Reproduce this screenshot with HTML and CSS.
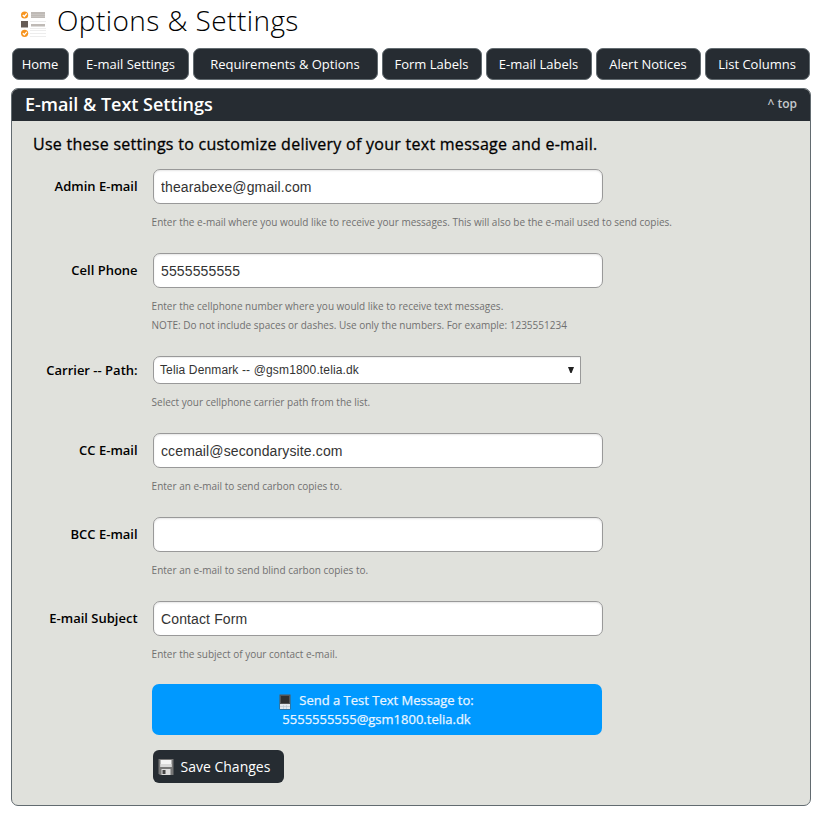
FILE: index.html
```html
<!DOCTYPE html>
<html lang="en">
<head>
<meta charset="utf-8">
<title>Options &amp; Settings</title>
<link rel="stylesheet" href="styles.css">
</head>
<body>
<header class="page-head">
  <svg class="list-icon" width="26" height="28" viewBox="0 0 26 28">
    <g fill="#f7941e"><circle cx="3.6" cy="4" r="3.6"/><circle cx="3.6" cy="22.3" r="3.6"/></g>
    <path d="M1.8 4l1.5 1.5 2.5-3M1.8 22.3l1.5 1.5 2.5-3" fill="none" stroke="#fff" stroke-width="1.3"/>
    <path d="M0 10h7v6.500H0z" fill="#665c56"/>
    <path d="M10 1h14v6H10z" fill="#bfbab6"/>
    <path d="M10 3.500h14M10 5.500h14" stroke="#d0ccc9" stroke-width=".6"/>
    <path d="M10 13h14v2.500H10z" fill="#bfbab6"/>
    <path d="M9 10.500h16M9 17.500h16M9 19.500h16M9 22.500h16M9 25.500h16" stroke="#ededed"/>
  </svg>
  <h1>Options &amp; Settings</h1>
</header>
<nav class="tabs">
  <a class="tab tab-home">Home</a>
  <a class="tab tab-email">E-mail Settings</a>
  <a class="tab tab-req">Requirements &amp; Options</a>
  <a class="tab tab-form">Form Labels</a>
  <a class="tab tab-labels">E-mail Labels</a>
  <a class="tab tab-alert">Alert Notices</a>
  <a class="tab tab-list">List Columns</a>
</nav>
<section class="panel">
  <div class="panel-head"><h2>E-mail &amp; Text Settings</h2><a class="top">^ top</a></div>
  <form class="panel-body">
    <p class="intro">Use these settings to customize delivery of your text message and e-mail.</p>
    <div class="row">
      <label for="admin">Admin E-mail</label>
      <div class="field"><input id="admin" type="text" value="thearabexe@gmail.com">
        <p class="hint">Enter the e-mail where you would like to receive your messages. This will also be the e-mail used to send copies.</p></div>
    </div>
    <div class="row">
      <label for="cell">Cell Phone</label>
      <div class="field"><input id="cell" type="text" value="5555555555">
        <p class="hint">Enter the cellphone number where you would like to receive text messages.<br>NOTE: Do not include spaces or dashes. Use only the numbers. For example: 1235551234</p></div>
    </div>
    <div class="row row-select">
      <label>Carrier -- Path:</label>
      <div class="field"><div class="select"><span>Telia Denmark -- @gsm1800.telia.dk</span>
        <svg width="6" height="6" viewBox="0 0 6 6"><path d="M0 0h6L3.600 6H2.400z" fill="#222"/></svg></div>
        <p class="hint">Select your cellphone carrier path from the list.</p></div>
    </div>
    <div class="row">
      <label for="cc">CC E-mail</label>
      <div class="field"><input id="cc" type="text" value="ccemail@secondarysite.com">
        <p class="hint">Enter an e-mail to send carbon copies to.</p></div>
    </div>
    <div class="row">
      <label for="bcc">BCC E-mail</label>
      <div class="field"><input id="bcc" type="text" value="">
        <p class="hint">Enter an e-mail to send blind carbon copies to.</p></div>
    </div>
    <div class="row">
      <label for="subject">E-mail Subject</label>
      <div class="field"><input id="subject" type="text" value="Contact Form">
        <p class="hint">Enter the subject of your contact e-mail.</p></div>
    </div>
    <div class="test">
      <div class="test-line"><svg width="12" height="16" viewBox="0 0 12 16">
        <path d="M.5.500h11v15H.5z" fill="#555"/><path d="M2 2h8v7H2z" fill="#303030"/><path d="M1 10h10v5H1z" fill="#e4e8ec"/>
        <path d="M1 12.500h10M4.500 11v4M7.500 11v4" stroke="#b8c4cf" stroke-width=".6"/></svg><span>Send a Test Text Message to:</span></div>
      <div>5555555555@gsm1800.telia.dk</div>
    </div>
    <div class="save">
      <svg width="16" height="16" viewBox="0 0 16 16">
        <path d="M.5 0h15v16H2L.5 14.500z" fill="#777"/><path d="M2.500 1h11v7h-11z" fill="#f4f4f4"/><path d="M2.500 5h11v3h-11z" fill="#d9d9d9"/>
        <path d="M3.500 10h9v6h-9z" fill="#ddd"/><path d="M4.500 11h3v4h-3z" fill="#444"/></svg>
      <span>Save Changes</span>
    </div>
  </form>
</section>
</body>
</html>
```
FILE: styles.css
```css
* { box-sizing: border-box; }
body { margin: 0; padding: 0 8px 0 11px; background: #fff; color: #000; font-family: "Open Sans", sans-serif; }
h1, h2, p { margin: 0; }
.page-head { display: flex; align-items: flex-start; height: 48px; padding-left: 10px; }
.list-icon { margin: 11px 10px 0 0; }
h1 { font-size: 28px; line-height: 41px; font-weight: 300; letter-spacing: .43px; white-space: nowrap; }
.tabs { display: flex; gap: 4px; padding-left: 1px; }
.tab { height: 32px; padding-right: 1px; border: 1px solid #626b70; border-radius: 7px; background: #262c32; color: #fff; font-size: 13px; line-height: 30px; text-align: center; white-space: nowrap; }
.tab-home { width: 57px; }
.tab-email { width: 116px; }
.tab-req { width: 185px; }
.tab-form { width: 100px; }
.tab-labels { width: 106px; }
.tab-alert { width: 105px; }
.tab-list { width: 105px; }
.panel { width: 800px; height: 718px; margin-top: 8px; border: 1px solid #626b70; border-radius: 7px; overflow: hidden; background: #e0e1dc; }
.panel-head { display: flex; justify-content: space-between; height: 32px; padding: 0 13px; background: #262c32; color: #fff; }
h2 { font-size: 18px; line-height: 30px; font-weight: 600; letter-spacing: -.02px; }
.top { color: #c5c9cc; font-size: 12px; line-height: 30px; font-weight: 600; }
.intro { height: 48px; padding-left: 21px; font-size: 16px; line-height: 46px; letter-spacing: .27px; -webkit-text-stroke: .3px #000; white-space: nowrap; }
.row { display: flex; margin-bottom: 21px; }
.row label { width: 125.6px; margin-right: 15.4px; font-size: 13px; line-height: 35px; font-weight: 600; text-align: right; white-space: nowrap; }
.row-select label { line-height: 28px; }
.field { flex: 1; }
.field input { display: block; width: 450px; height: 35px; padding: 0 7px; border: 1px solid #999; border-radius: 7px; background: #fff; box-shadow: inset 0 1px 2px #e6e6e6; color: #333; font: 14px "Liberation Sans", sans-serif; letter-spacing: .13px; }
.select { display: flex; align-items: center; justify-content: space-between; width: 428px; height: 28px; padding: 0 6px 1px 6px; border: 1px solid #999; border-radius: 7px 0 0 7px; background: #fff; box-shadow: inset 0 1px 1px #eee; color: #333; font: 12px "Liberation Sans", sans-serif; letter-spacing: .14px; }
.hint { margin: 9px 0 0 -1.4px; color: #707070; font-size: 10px; line-height: 19px; white-space: nowrap; }
.test { width: 450px; height: 51px; margin: -1px 0 15px 140px; padding: 7px 1px 0 0; border-radius: 7px; background: #09f; color: #e9f5ff; font-size: 13px; line-height: 19px; -webkit-text-stroke: .25px #e9f5ff; text-align: center; }
.test-line { display: flex; justify-content: center; align-items: center; gap: 8px; height: 19px; }
.test-line svg { margin-top: 2px; }
.save { display: flex; align-items: center; width: 131px; height: 33px; margin-left: 141px; padding-left: 5px; gap: 6.500px; border-radius: 6px; background: #262c32; color: #fff; font-size: 14px; white-space: nowrap; }
```
